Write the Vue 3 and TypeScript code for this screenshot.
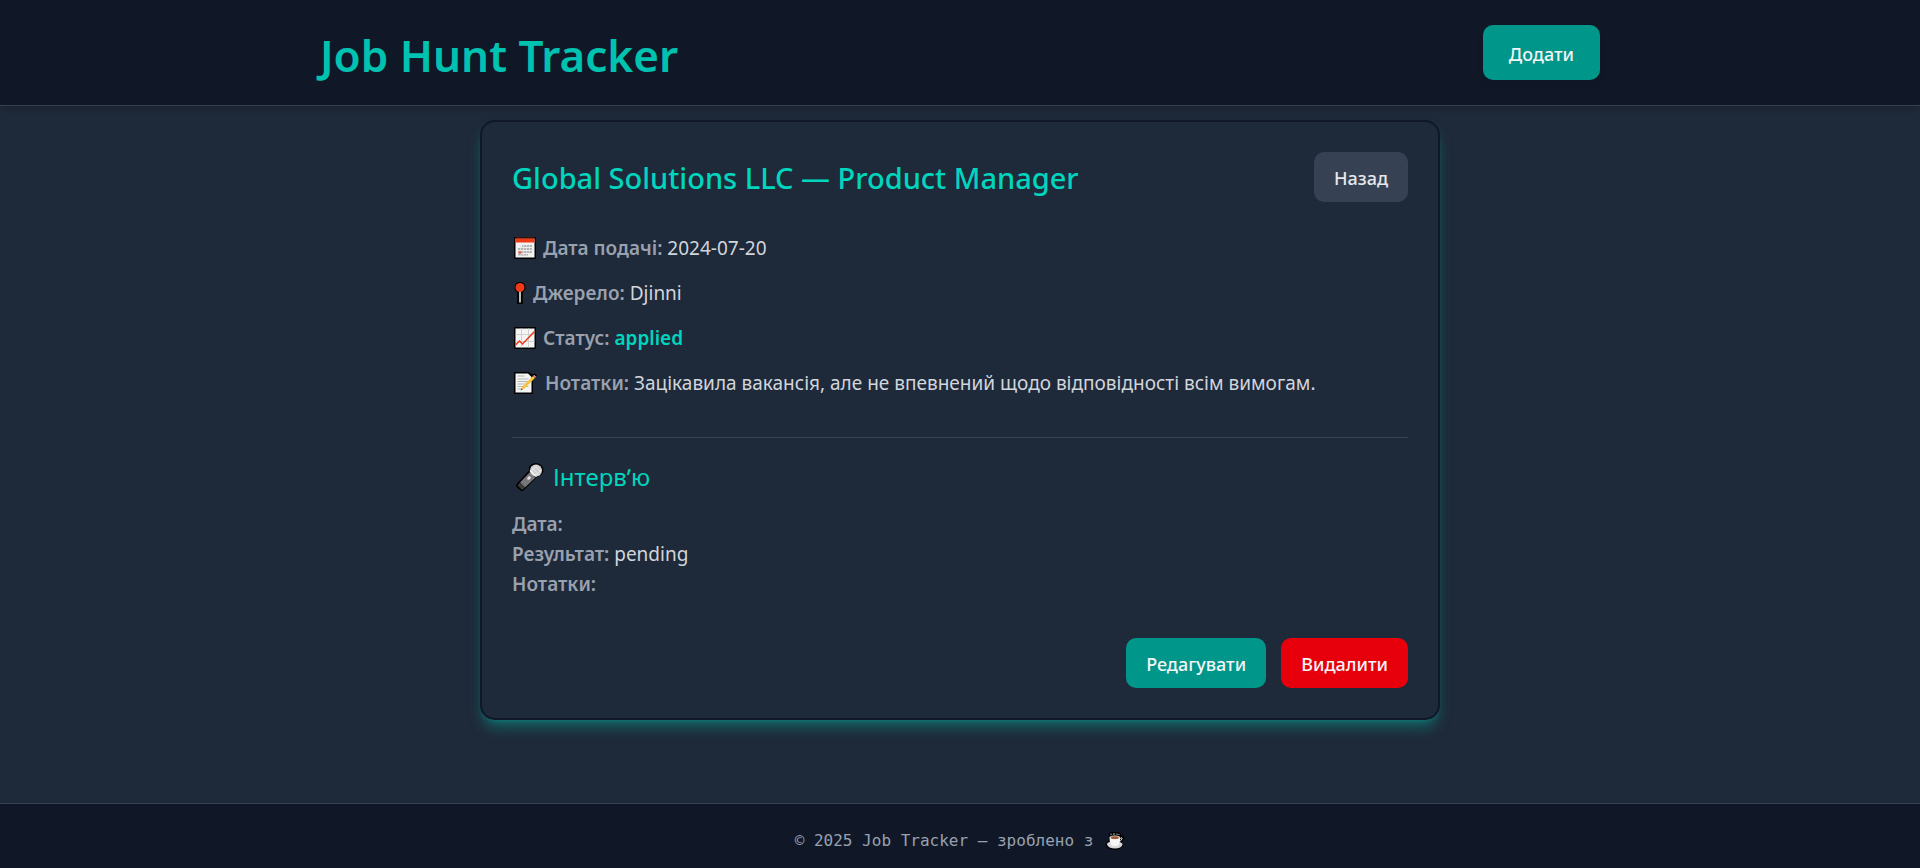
<script setup lang="ts">
interface Interview {
  date: string
  result: string
  notes: string
}

interface Job {
  company: string
  position: string
  appliedAt: string
  source: string
  status: string
  notes: string
  interview: Interview
}

const job: Job = {
  company: 'Global Solutions LLC',
  position: 'Product Manager',
  appliedAt: '2024-07-20',
  source: 'Djinni',
  status: 'applied',
  notes: 'Зацікавила вакансія, але не впевнений щодо відповідності всім вимогам.',
  interview: { date: '', result: 'pending', notes: '' },
}
</script>

<template>
  <div class="page">
    <header class="header">
      <div class="header-inner">
        <h1 class="brand">Job Hunt Tracker</h1>
        <button type="button" class="btn btn-add">Додати</button>
      </div>
    </header>

    <main class="main">
      <article class="card">
        <div class="card-head">
          <h2 class="title">{{ job.company }} — {{ job.position }}</h2>
          <button type="button" class="btn btn-back">Назад</button>
        </div>

        <div class="details">
          <p class="row">
            <svg class="icon" viewBox="0 0 24 24" aria-hidden="true">
              <rect x="1" y="1" width="22" height="22" rx="1" fill="#000" />
              <rect x="2.500" y="2.500" width="19" height="19" fill="#f2f2f2" />
              <rect x="2.500" y="2.500" width="19" height="4" fill="#f03a17" />
              <rect x="2.500" y="1.500" width="19" height="1" fill="#7a1a0c" />
              <path d="M9 9h10v2H9zM5 12h14v2H5zM5 15h14v2H5zM5 18h10v1.500H5z" fill="#b4b4b4" />
              <path d="M7.500 9v10M10.500 9v10M13.500 9v10M16.500 9v10" stroke="#e6e6e6" stroke-width=".8" />
              <circle cx="7" cy="16.500" r="1.600" fill="#ea6a55" />
            </svg>
            <span><b class="label">Дата подачі:</b> {{ job.appliedAt }}</span>
          </p>
          <p class="row">
            <svg class="icon icon-pin" viewBox="0 0 14 24" aria-hidden="true">
              <path d="M7 1a5.500 5.500 0 0 1 2.800 10.200V20.500L10 23H4l.2-2.500V11.200A5.500 5.500 0 0 1 7 1z" fill="#000" />
              <rect x="6" y="10" width="2" height="11.500" fill="#b9b9b9" />
              <circle cx="7" cy="6.500" r="4.500" fill="#f03a17" />
            </svg>
            <span><b class="label">Джерело:</b> {{ job.source }}</span>
          </p>
          <p class="row">
            <svg class="icon" viewBox="0 0 24 24" aria-hidden="true">
              <rect x="1" y="1" width="22" height="22" rx="1" fill="#000" />
              <rect x="2.500" y="2.500" width="19" height="19" fill="#f4f4f4" />
              <path d="M8.500 2.500v19M15.500 2.500v19M2.500 8.500h19M2.500 15.500h19" stroke="#d0d0d0" stroke-width="1" />
              <path d="M2.500 19l4-4 3 3L21.500 5.500" fill="none" stroke="#f03a17" stroke-width="1.500" />
            </svg>
            <span><b class="label">Статус:</b> <b class="status">{{ job.status }}</b></span>
          </p>
          <p class="row">
            <svg class="icon icon-note" viewBox="0 0 26 24" aria-hidden="true">
              <path d="M1 1h15l3 2.500 3-1 2 2-4 5V23H1z" fill="#000" />
              <path d="M2.500 2.500h12.500l3.500 3.500v15.500h-16z" fill="#f4f4f4" />
              <path d="M4.500 5h7M4.500 8h11M4.500 10.500h11M4.500 13h9M4.500 15.500h11M4.500 18h5" stroke="#b5b5b5" stroke-width="1" />
              <path d="M8 19l1.500-3.500L20 5l2 2-10.500 10.500z" fill="#f8c33c" />
              <path d="M20 5l1.200-1.200 2 2L22 7z" fill="#e88a7d" />
              <path d="M7.500 19.500l1-2.200 1.200 1.200z" fill="#555" />
            </svg>
            <span><b class="label">Нотатки:</b> {{ job.notes }}</span>
          </p>
        </div>

        <section class="interview">
          <h3 class="subtitle">
            <svg class="icon-mic" viewBox="0 0 30 30" aria-hidden="true">
              <path d="M16 2.500A8 8 0 0 1 28 5.500Q30 13 22 15L8.500 28.500Q7 30 5.500 28.500L1.500 25Q.5 23.500 1.500 22L14 8.500Q13.500 4.500 16 2.500z" fill="#000" />
              <path d="M15 10l5.500 5.500L10 25.500 5 20.500z" fill="#777" />
              <path d="M5 20.500l5 5L7.200 28 2.500 23.500z" fill="#3b3b3b" />
              <circle cx="21" cy="8.500" r="6" fill="#cfcfcf" />
              <path d="M16.500 5.500l8 8M19 3l7 7M20 14l6.500-6.500M16 10l6-7" stroke="#ececec" stroke-width=".8" />
              <path d="M15 8.500l6.500 6" stroke="#f8f8f8" stroke-width="1.500" />
              <ellipse cx="14" cy="16" rx="2" ry="1.500" fill="#e5e5e5" transform="rotate(-45 14 16)" />
            </svg>
            <span>Інтервʼю</span>
          </h3>
          <p class="line"><b class="label">Дата:</b> {{ job.interview.date }}</p>
          <p class="line"><b class="label">Результат:</b> {{ job.interview.result }}</p>
          <p class="line"><b class="label">Нотатки:</b> {{ job.interview.notes }}</p>
        </section>

        <div class="actions">
          <button type="button" class="btn btn-edit">Редагувати</button>
          <button type="button" class="btn btn-delete">Видалити</button>
        </div>
      </article>
    </main>

    <footer class="footer">
      <span>© 2025 Job Tracker — зроблено з</span>
      <svg class="icon-cup" viewBox="0 0 20 20" aria-hidden="true">
        <path d="M4 5V2l2-1h8l2 2v1.500l2.500 0 1 2-1.500 3-1.500 1.500q3 2 1 4.500-3 3.500-8 3.500T1 15.500q-1.500-3 2.500-5z" fill="#000" />
        <path d="M2 13.500q0-2 3-2.500h9q3.500.5 3.500 2.500-1 4-7.500 4T2 13.500z" fill="#d9d9d9" />
        <path d="M4.500 6.500h10.500q.5 7-3 8.500H8Q4.500 13.500 4.500 6.500z" fill="#f6f6f6" />
        <ellipse cx="9.800" cy="6.500" rx="5.200" ry="2" fill="#e6ddd6" />
        <ellipse cx="9.800" cy="6.700" rx="4" ry="1.400" fill="#9c5a35" />
        <path d="M15 7.500q2.500-1.500 2 0T14.800 10.500" fill="none" stroke="#ddd" stroke-width="1" />
        <path d="M6 4V2.500M9 4V2M12 4V2.500M14 4V3" stroke="#bbb" stroke-width="1" />
      </svg>
    </footer>
  </div>
</template>

<style>
body {
  margin: 0;
  background: #1e2939;
}
</style>

<style scoped>
.page {
  display: flex;
  flex-direction: column;
  min-height: 100vh;
  background: #1e2939;
  color: #d1d5dc;
  font-family: "Noto Sans", "Open Sans", sans-serif;
  font-size: 19px;
  line-height: 30px;
}

h1, h2, h3, p {
  margin: 0;
}

.header {
  background: #101828;
  border-bottom: 1px solid #364153;
  box-shadow: 0 4px 6px -1px rgba(0, 0, 0, 0.1), 0 2px 4px -2px rgba(0, 0, 0, 0.1);
}

.header-inner {
  display: flex;
  align-items: center;
  justify-content: space-between;
  max-width: 1280px;
  margin: 0 auto;
  padding: 25px 0;
}

.brand {
  padding-top: 5px;
  color: #00c2b0;
  font-size: 44px;
  font-weight: 600;
  line-height: 50px;
}

.btn {
  border: 0;
  border-radius: 10px;
  padding: 11px 20px 9px;
  color: #f3f4f6;
  font-family: inherit;
  font-size: 18px;
  font-weight: 500;
  line-height: 30px;
  cursor: pointer;
}

.btn-add {
  padding: 14px 26px 11px;
  background: #009689;
  box-shadow: 0 4px 6px -1px rgba(0, 0, 0, 0.1);
}

.btn-back {
  background: #364153;
  color: #e5e7eb;
}

.btn-edit {
  background: #009689;
}

.btn-delete {
  background: #e7000b;
}

.main {
  flex: 1;
  padding: 14px 0 40px;
}

.card {
  box-sizing: border-box;
  max-width: 960px;
  margin: 0 auto;
  padding: 30px;
  border: 2px solid #101828;
  border-radius: 15px;
  background: #1e2939;
  box-shadow: 0 10px 15px -3px rgba(0, 187, 167, 0.4), 0 4px 6px -4px rgba(0, 187, 167, 0.4);
}

.card-head {
  display: flex;
  align-items: center;
  justify-content: space-between;
  margin-bottom: 31px;
}

.title {
  padding-top: 2px;
  color: #00d5be;
  font-size: 29px;
  font-weight: 500;
  line-height: 38px;
}

.details {
  display: grid;
  gap: 15px;
}

.row {
  display: flex;
  align-items: center;
  gap: 6px;
}

.label {
  color: #99a1af;
  font-weight: 600;
}

.status {
  color: #00d5be;
  font-weight: 600;
}

.icon {
  flex: none;
  width: 24px;
  height: 24px;
  margin-left: 1px;
}

.icon-pin {
  width: 14px;
}

.icon-note {
  width: 26px;
}

.interview {
  margin-top: 39px;
  padding-top: 19px;
  border-top: 1px solid #364153;
}

.subtitle {
  display: flex;
  align-items: center;
  gap: 8px;
  margin-bottom: 12px;
  color: #00d5be;
  font-size: 24px;
  font-weight: 400;
  line-height: 40px;
}

.icon-mic {
  width: 30px;
  height: 30px;
  margin-left: 3px;
}

.actions {
  display: flex;
  justify-content: flex-end;
  gap: 15px;
  margin-top: 39px;
}

.footer {
  display: flex;
  align-items: center;
  justify-content: center;
  gap: 12px;
  padding: 24px 0 15px;
  border-top: 1px solid #364153;
  background: #101828;
  color: #99a1af;
  font-family: "DejaVu Sans Mono", monospace;
  font-size: 16px;
  line-height: 25px;
}

.icon-cup {
  width: 20px;
  height: 20px;
}
</style>
